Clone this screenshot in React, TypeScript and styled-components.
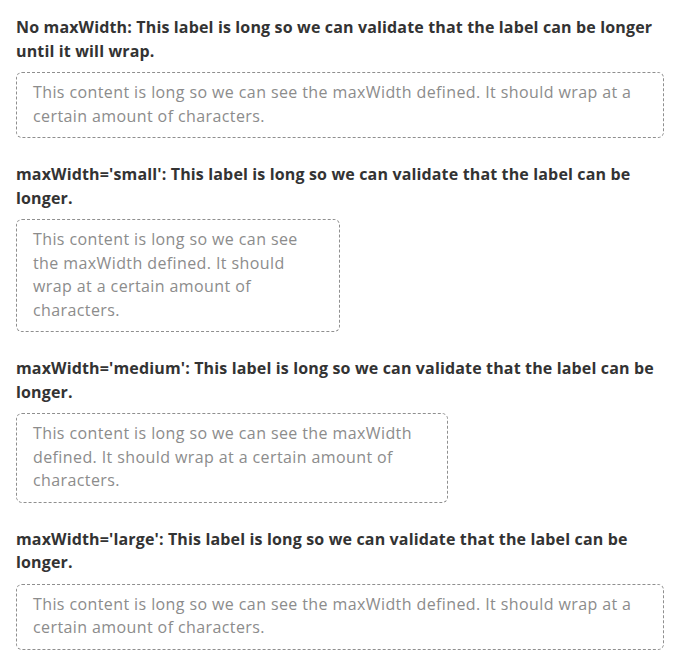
import React from 'react';
import styled, { createGlobalStyle } from 'styled-components';

const Global = createGlobalStyle`
  html, body { margin: 0; padding: 0; background: #ffffff; }
  body { font-family: "Open Sans", "Noto Sans", sans-serif; }
`;

const Page = styled.div`
  display: flex;
  flex-direction: column;
  gap: 25px;
  padding: 16px 32px 16px 16px;
`;

const Field = styled.div`
  display: flex;
  flex-direction: column;
  gap: 9px;
`;

const Label = styled.div`
  font-size: 16px;
  line-height: 23.5px;
  font-weight: 700;
  letter-spacing: 0.15px;
  color: #333333;
`;

const widths: Record<string, string> = {
  none: 'none',
  small: '324px',
  medium: '432px',
  large: '864px',
};

const Content = styled.div<{ $max: string }>`
  box-sizing: border-box;
  max-width: ${(p) => widths[p.$max]};
  border: 1px dashed #8f8f8f;
  border-radius: 6px;
  padding: 8px 16px 9px;
  font-size: 16px;
  line-height: 23.5px;
  letter-spacing: 0.4px;
  color: #8c8c8c;
`;

const text = 'This content is long so we can see the maxWidth defined. It should wrap at a certain amount of characters.';

const items = [
  { max: 'none', label: 'No maxWidth: This label is long so we can validate that the label can be longer until it will wrap.' },
  { max: 'small', label: "maxWidth='small': This label is long so we can validate that the label can be longer." },
  { max: 'medium', label: "maxWidth='medium': This label is long so we can validate that the label can be longer." },
  { max: 'large', label: "maxWidth='large': This label is long so we can validate that the label can be longer." },
];

export default function App() {
  return (
    <>
      <Global />
      <Page>
        {items.map((it) => (
          <Field key={it.max}>
            <Label>{it.label}</Label>
            <Content $max={it.max}>{text}</Content>
          </Field>
        ))}
      </Page>
    </>
  );
}
